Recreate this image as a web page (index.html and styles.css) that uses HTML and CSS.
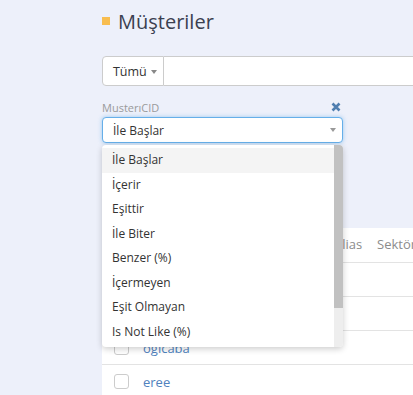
FILE: index.html
```html
<!DOCTYPE html>
<html lang="tr">
<head>
    <meta charset="UTF-8">
    <meta name="viewport" content="width=device-width, initial-scale=1.0">
    <title>Müşteriler</title>
    <link rel="stylesheet" href="styles.css">
</head>
<body>
    <div class="page">
        <h1 class="page-title">Müşteriler</h1>

        <div class="search">
            <button class="search-scope">Tümü <span class="caret"></span></button>
            <input class="search-input" type="text">
        </div>

        <div class="filter">
            <div class="filter-head">
                <span class="filter-label">MusterıCID</span>
                <svg class="filter-remove" width="10" height="10" viewBox="0 0 10 10">
                    <path d="M1.5 1.5 L8.5 8.5 M8.5 1.5 L1.5 8.5" stroke="#4f7eb0" stroke-width="2.6" stroke-linecap="butt"/>
                </svg>
            </div>
            <div class="select-wrap">
                <div class="select">
                    <span>İle Başlar</span>
                    <span class="caret"></span>
                </div>
                <div class="select-menu">
                    <ul class="select-options">
                        <li class="active">İle Başlar</li>
                        <li>İçerir</li>
                        <li>Eşittir</li>
                        <li>İle Biter</li>
                        <li>Benzer (%)</li>
                        <li>İçermeyen</li>
                        <li>Eşit Olmayan</li>
                        <li>Is Not Like (%)</li>
                        <li>Boş</li>
                        <li>Boş Değil</li>
                    </ul>
                    <div class="scrollbar">
                        <div class="scrollbar-thumb"></div>
                    </div>
                </div>
            </div>
        </div>

        <div class="grid">
            <div class="grid-row grid-header">
                <div class="cell"></div>
                <div class="cell">Ad</div>
                <div class="cell">Alias</div>
                <div class="cell">Sektör</div>
            </div>
            <div class="grid-row">
                <div class="cell"><span class="check"></span></div>
                <div class="cell"><a href="#">aaaa</a></div>
                <div class="cell"></div>
                <div class="cell"></div>
            </div>
            <div class="grid-row">
                <div class="cell"><span class="check"></span></div>
                <div class="cell"><a href="#">test</a></div>
                <div class="cell"></div>
                <div class="cell"></div>
            </div>
            <div class="grid-row">
                <div class="cell"><span class="check"></span></div>
                <div class="cell"><a href="#">ogicaba</a></div>
                <div class="cell"></div>
                <div class="cell"></div>
            </div>
            <div class="grid-row">
                <div class="cell"><span class="check"></span></div>
                <div class="cell"><a href="#">eree</a></div>
                <div class="cell"></div>
                <div class="cell"></div>
            </div>
        </div>
    </div>
</body>
</html>
```

FILE: styles.css
```css
body {
    margin: 0;
    background-color: #edf0fa;
    font-family: "Open Sans", "Noto Sans", sans-serif;
    font-stretch: 93%;
    color: #333;
    overflow: hidden;
}

.page {
    width: 640px;
    padding-left: 102px;
}

.page-title {
    display: flex;
    align-items: center;
    margin: 0;
    padding-top: 5px;
    height: 32px;
    font-size: 20px;
    font-weight: normal;
    font-stretch: 100%;
    color: #3b4050;
}

.page-title::before {
    content: "";
    width: 8px;
    height: 8px;
    margin-right: 8px;
    background-color: #f8bd4f;
}

.search {
    display: flex;
    margin-top: 19px;
    height: 30px;
}

.search-scope {
    width: 62px;
    padding: 0 0 0 4px;
    border: 1px solid #ccc;
    border-radius: 4px 0 0 4px;
    background-color: #fff;
    font-family: inherit;
    font-stretch: inherit;
    font-size: 12.5px;
    color: #333;
    text-align: center;
}

.search-input {
    flex: 1;
    border: 1px solid #ccc;
    border-left: none;
    background-color: #fff;
}

.caret {
    display: inline-block;
    width: 0;
    height: 0;
    margin-left: 1px;
    vertical-align: middle;
    border-top: 4px solid #888;
    border-left: 3px solid transparent;
    border-right: 3px solid transparent;
}

.filter {
    width: 241px;
    margin-top: 13px;
}

.filter-head {
    display: flex;
    justify-content: space-between;
    align-items: center;
    height: 16px;
    padding-right: 2px;
}

.filter-label {
    font-size: 11px;
    color: #9a9a9a;
}

.select-wrap {
    position: relative;
    margin-top: 2px;
}

.select {
    display: flex;
    justify-content: space-between;
    align-items: center;
    height: 26px;
    box-sizing: border-box;
    padding: 0 6px 0 10px;
    border: 1px solid #66afe9;
    border-radius: 4px;
    background-color: #fff;
    box-shadow: 0 0 4px rgba(102, 175, 233, 0.6);
    font-size: 12px;
}

.select .caret {
    border-top-color: #999;
}

.select-menu {
    position: absolute;
    top: 28px;
    left: 0;
    right: 0;
    z-index: 10;
    display: flex;
    height: 202px;
    overflow: hidden;
    background-color: #fff;
    border-radius: 4px;
    box-shadow: 0 2px 6px rgba(0, 0, 0, 0.2);
}

.select-options {
    flex: 1;
    margin: 0;
    padding: 3px 0;
    list-style: none;
    font-size: 12px;
    font-stretch: 89%;
}

.select-options li {
    height: 24.5px;
    line-height: 24.5px;
    padding: 0 10px;
}

.select-options li.active {
    background-color: #f4f4f4;
}

.scrollbar {
    width: 9px;
    background-color: #eeeeee;
}

.scrollbar-thumb {
    height: 163px;
    background-color: #c1c1c1;
}

.grid {
    margin-top: 85px;
    background-color: #fff;
    font-size: 13px;
}

.grid-row {
    display: grid;
    grid-template-columns: 41px 191px 43px 1fr;
    box-sizing: border-box;
    height: 34px;
    align-items: center;
    border-top: 1px solid #e3e3e3;
}

.grid-header {
    padding-bottom: 3px;
    border-top: none;
    color: #8c8c8c;
}

.cell {
    white-space: nowrap;
}

.check {
    display: block;
    width: 13px;
    height: 13px;
    margin-left: 12px;
    border: 1px solid #ccc;
    border-radius: 3px;
}

.grid a {
    color: #4f82be;
    text-decoration: none;
}
```
